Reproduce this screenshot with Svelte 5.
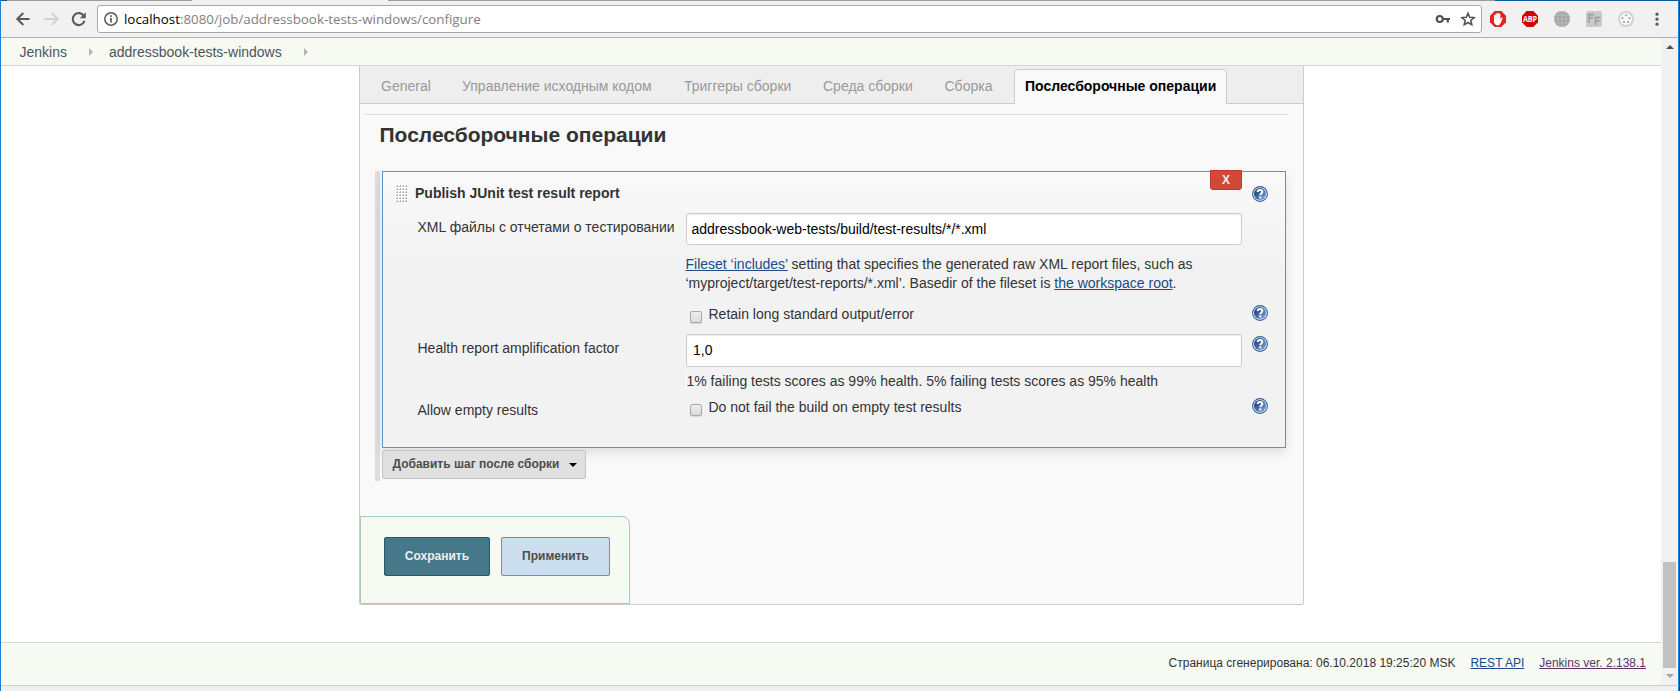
<script>
  const tabs = [
    { name: 'General', width: 81 },
    { name: 'Управление исходным кодом', width: 222 },
    { name: 'Триггеры сборки', width: 139 },
    { name: 'Среда сборки', width: 121.5 },
    { name: 'Сборка', width: 69.5 }
  ];
  const gripDots = Array.from({ length: 24 }, (_, i) => ({ x: (i % 4) * 3 + 1, y: Math.floor(i / 4) * 3 + 1 }));
</script>

{#snippet help()}
  <svg class="help" width="16" height="16" viewBox="0 0 16 16">
    <defs>
      <linearGradient id="helpFill" x1="0" y1="0" x2="1" y2="1">
        <stop offset="0.2" stop-color="#1f4680" />
        <stop offset="1" stop-color="#88aedc" />
      </linearGradient>
    </defs>
    <circle cx="8" cy="8" r="7.400" fill="#eef3fa" stroke="#355f9c" stroke-width="1.100" />
    <circle cx="8" cy="8" r="6" fill="url(#helpFill)" />
    <path d="M5.600 6C5.700 4.500 6.700 3.900 8 3.900c1.500 0 2.400.8 2.400 1.900 0 1.800-2.100 1.700-2.100 3.500" fill="none" stroke="#fff" stroke-width="2" />
    <rect x="7.200" y="10.400" width="2.100" height="2" fill="#fff" />
  </svg>
{/snippet}

<div class="window">
  <div class="titlebar"><i class="s1"></i><i class="s2"></i><i class="s3"></i><i class="s4"></i><i class="s5"></i></div>
  <header class="toolbar">
    <svg class="nav" width="86" height="32" viewBox="0 0 86 32">
      <path d="M28.500 18H16.500M22.300 12l-6 6 6 6" fill="none" stroke="#5a5a5e" stroke-width="2" />
      <path d="M43.500 18H56M50.700 12l6 6-6 6" fill="none" stroke="#d2d2d4" stroke-width="2" />
      <path d="M82.800 14.800A6 6 0 1 0 83.500 19.800" fill="none" stroke="#5a5a5e" stroke-width="2.100" />
      <path d="M84.800 11.200v6h-6z" fill="#5a5a5e" />
    </svg>
    <div class="omnibox">
      <svg width="16" height="16" viewBox="0 0 16 16">
        <circle cx="8" cy="8" r="6.200" fill="none" stroke="#5a5a5e" stroke-width="1.500" />
        <path d="M8 7v4.500M8 4.300v1.700" stroke="#5a5a5e" stroke-width="1.700" />
      </svg>
      <span class="url"><b>localhost</b>:8080/job/addressbook-tests-windows/configure</span>
      <svg class="key" width="16" height="16" viewBox="0 0 16 16">
        <circle cx="4.800" cy="8" r="3" fill="none" stroke="#505050" stroke-width="2.200" />
        <path d="M8 8h7M12.800 8v3.500" fill="none" stroke="#505050" stroke-width="2.200" />
      </svg>
      <svg class="star" width="16" height="16" viewBox="0 0 16 16">
        <path d="M8 2.200l1.700 4 4.400.4-3.300 2.900 1 4.300L8 11.500l-3.800 2.300 1-4.300L1.900 6.600l4.400-.4z" fill="none" stroke="#505050" stroke-width="1.500" />
      </svg>
    </div>
    <div class="extensions">
      <svg width="16" height="16" viewBox="0 0 16 16">
        <path d="M4.700 0h6.600L16 4.700v6.600L11.300 16H4.700L0 11.300V4.700z" fill="#e2241f" />
        <path d="M4 7.500V4.300q.8-.8 1.500 0V2.900q.8-.9 1.600 0V2.200q.9-.9 1.700 0v.8q.9-.8 1.600 0v5.200l1-1.500q1.500-.4 1.200.9L10.600 12.200 9 14.300H6.200L4 11.700z" fill="#fff" />
        <path d="M5.600 4.500v4M7.100 3.400v4.600M8.700 3.400v4.600" stroke="#f3b5b3" stroke-width=".4" />
      </svg>
      <svg width="16" height="16" viewBox="0 0 16 16">
        <path d="M4.700 0h6.600L16 4.700v6.600L11.300 16H4.700L0 11.300V4.700z" fill="#cf0000" />
        <text x="8" y="10.900" text-anchor="middle" font-size="8" font-weight="bold" font-family="Open Sans, sans-serif" fill="#fff" textLength="14.200" lengthAdjust="spacingAndGlyphs">ABP</text>
      </svg>
      <svg width="16" height="16" viewBox="0 0 16 16">
        <circle cx="8" cy="8" r="8" fill="#a4a4a4" />
        <path d="M8 0v16M0 8h16M1.500 4h13M1.500 12h13" stroke="#c4c4c4" fill="none" stroke-width=".7" />
        <ellipse cx="8" cy="8" rx="4.300" ry="7.700" stroke="#c4c4c4" fill="none" stroke-width=".7" />
      </svg>
      <svg width="16" height="16" viewBox="0 0 16 16">
        <rect width="16" height="16" rx="1.500" fill="#cacaca" />
        <path d="M2.800 11.500V3.500H8M2.800 7H7M9.500 14V6.500h5M9.500 10h4" stroke="#a2a2a2" stroke-width="1.900" fill="none" />
      </svg>
      <svg width="16" height="16" viewBox="0 0 16 16">
        <circle cx="8" cy="8" r="7" fill="#f8f8f8" stroke="#d2d2d2" stroke-width="2" />
        <path d="M8 3l1.300 1.300L8 5.500 6.700 4.300zM12.600 6.400l-.5 2-1.700-.6.300-1.700zM10.900 12l-1.900-.1.200-1.800 1.700-.1zM5.100 12l0-2 1.700.1.200 1.800zM3.400 6.400l1.900-.3.300 1.700-1.700.6z" fill="#a4a4a4" />
      </svg>
      <svg class="dots" width="16" height="16" viewBox="0 0 16 16">
        <circle cx="8" cy="3.200" r="1.600" /><circle cx="8" cy="8.200" r="1.600" /><circle cx="8" cy="13.200" r="1.600" />
      </svg>
    </div>
  </header>

  <div class="viewport">
    <div class="page">
      <nav class="crumbs">
        <span>Jenkins</span><i></i><span>addressbook-tests-windows</span><i></i>
      </nav>

      <main>
        <div class="panel">
          <div class="tabs">
            {#each tabs as tab}
              <span class="tab" style="width:{tab.width}px">{tab.name}</span>
            {/each}
            <span class="tab active">Послесборочные операции</span>
          </div>
          <div class="rule"></div>
          <h1>Послесборочные операции</h1>

          <div class="steps">
            <section class="card">
              <div class="row title">
                <svg class="grip" width="12" height="18" viewBox="0 0 12 18">
                  <rect width="12" height="18" fill="#fff" />
                  {#each gripDots as d}
                    <path d="M{d.x} {d.y + 2}v-1h1v-1h1v2z" fill="#b4b4b4" />
                  {/each}
                </svg>
                <strong>Publish JUnit test result report</strong>
                <button class="remove">X</button>
                {@render help()}
              </div>
              <div class="row r1">
                <span class="label">XML файлы с отчетами о тестировании</span>
                <div class="input">addressbook-web-tests/build/test-results/*/*.xml</div>
              </div>
              <div class="row hint">
                <span class="label"></span>
                <div><a>Fileset ‘includes’</a> setting that specifies the generated raw XML report files, such as<br />‘myproject/target/test-reports/*.xml’. Basedir of the fileset is <a>the workspace root</a>.</div>
              </div>
              <div class="row r2">
                <span class="label"></span>
                <div class="check"><i></i><span>Retain long standard output/error</span></div>
                {@render help()}
              </div>
              <div class="row r3">
                <span class="label">Health report amplification factor</span>
                <div class="input number">1,0</div>
                {@render help()}
              </div>
              <div class="row desc">
                <span class="label"></span>
                <div>1% failing tests scores as 99% health. 5% failing tests scores as 95% health</div>
              </div>
              <div class="row r4">
                <span class="label">Allow empty results</span>
                <div class="check"><i></i><span>Do not fail the build on empty test results</span></div>
                {@render help()}
              </div>
            </section>
            <button class="add">Добавить шаг после сборки <i></i></button>
          </div>

          <div class="actions">
            <button class="save">Сохранить</button>
            <button class="apply">Применить</button>
          </div>
        </div>
      </main>

      <footer>
        <span>Страница сгенерирована: 06.10.2018 19:25:20 MSK</span>
        <a>REST API</a>
        <a class="visited">Jenkins ver. 2.138.1</a>
      </footer>
    </div>
    <div class="scrollbar"><i class="up"></i><i class="thumb"></i><i class="down"></i></div>
  </div>
  <div class="bottom"></div>
</div>

<style>
  :global(body) { margin: 0; overflow: hidden; }
  .window, .window * { box-sizing: border-box; }
  .window { display: flex; flex-direction: column; width: 1680px; height: 691px; background: #f1f1f2; border-left: 1px solid #1883d7; border-right: 1px solid #1c4468; font: 14px/20px "Liberation Sans", Arial, sans-serif; color: #333; white-space: nowrap; }
  button { font: bold 12px/16px "Liberation Sans", Arial, sans-serif; padding: 0; margin: 0; }
  svg { display: block; flex: none; }
  a { color: #204a87; text-decoration: underline; }

  .titlebar { display: flex; height: 1px; flex: none; }
  .s1 { width: 6px; background: #0b5a9f; }
  .s2 { width: 185px; background: #a09c9e; }
  .s3 { width: 196px; background: #f1f1f2; }
  .s4 { width: 1107px; background: #a09c9e; }
  .s5 { flex: 1; background: #0b5a9f; }

  .toolbar { display: flex; height: 37px; flex: none; border-bottom: 1px solid #b0b0b2; border-right: 1px solid #1883d7; }
  .nav { margin: 0 10px 0 0; }
  .omnibox { display: flex; align-items: center; width: 1385px; height: 28px; margin-top: 4px; padding: 0 5px; background: #fff; border: 1px solid #a8a8aa; border-radius: 3px; }
  .url { flex: 1; margin-left: 5px; font: 13.35px/20px "Open Sans", sans-serif; color: #808080; }
  .url b { font-weight: normal; color: #000; }
  .key { margin-right: 9px; }
  .extensions { display: flex; gap: 16px; margin: 10px 0 0 8px; }
  .dots { fill: #5a5a5e; margin-left: -1.500px; }

  .viewport { display: flex; flex: none; height: 647px; border-right: 1px solid #1883d7; }
  .page { display: flex; flex-direction: column; width: 1660px; background: #fff; }
  .crumbs { display: flex; align-items: center; height: 28px; flex: none; padding: 1px 0 0 18.500px; background: #f6faf2; border-bottom: 1px solid #d3d7cf; color: #4d545d; }
  .crumbs i { width: 0; height: 0; border: 4px solid transparent; border-left-color: #b4b4b4; border-right: 0; }
  .crumbs i:nth-child(2) { margin: 0 16px 0 22px; }
  .crumbs i:last-child { margin-left: 22px; }

  main { height: 576px; flex: none; padding-left: 358px; }
  .panel { width: 945px; height: 539px; background: #f9f9f9; border: 1px solid #ccc; border-top: 0; border-radius: 0 0 3px 3px; }
  .tabs { display: flex; height: 38px; padding: 3px 0 0 21px; background: #eee; border-bottom: 1px solid #ccc; color: #999; }
  .tab { height: 34px; padding-top: 7px; }
  .tab.active { height: 35px; width: 213px; padding: 6px 0 0 10px; font-weight: bold; color: #000; background: #f9f9f9; border: 1px solid #ccc; border-bottom: 0; border-radius: 5px 5px 0 0; }
  .rule { width: 923px; height: 1px; margin: 10px 0 0 5px; background: #ddd; }
  h1 { margin: 8px 0 0 19.500px; height: 48px; font: bold 21px/24px "Liberation Sans", Arial, sans-serif; color: #333; }

  .steps { width: 911px; height: 310px; margin-left: 15px; padding-left: 2px; border-left: 5px solid #ddd; }
  .card { width: 904px; height: 277px; border: 1px solid #5c94c5; background: linear-gradient(#f9f9f9, #f2f2f2 36%); box-shadow: 0 5px 10px rgba(0, 0, 0, .1); }
  .row { display: flex; align-items: flex-start; padding-left: 34px; }
  .row > .help { margin-left: 10px; }
  .label { width: 269px; flex: none; padding-left: .5px; }
  .title { height: 41px; padding-left: 12px; }
  .grip { margin-top: 12px; }
  .title strong { flex: 1; margin: 11px 0 0 8px; }
  .title .remove { width: 32px; height: 20px; margin-top: -2px; color: #eee; background: #d24939; border: 1px solid #c0392b; border-radius: 0 0 3px 3px; }
  .title > .help { margin: 14px 17px 0 10px; }
  .r1 { height: 32px; }
  .r1 .label { padding-top: 4px; }
  .input { width: 556px; height: 32px; padding: 5px 4.500px 0; background: #fff; border: 1px solid #ccc; border-radius: 3px; color: #000; box-shadow: inset 0 1px 1px rgba(0, 0, 0, .08); }
  .hint { height: 60px; padding-top: 10px; line-height: 19px; }
  .hint div { margin-left: -.5px; }
  .r2 { height: 29px; }
  .check { display: flex; width: 556px; }
  .check i { width: 12px; height: 12px; margin: 6px 6.500px 0 4px; border: 1px solid #a8a8a8; border-radius: 2px; background: linear-gradient(#ececec, #dcdcdc); box-shadow: 0 1px 1px rgba(0, 0, 0, .12); }
  .check span { margin-top: -1px; }
  .r3 { height: 33px; }
  .r3 .label { padding-top: 4px; }
  .r3 .help { margin-top: 2px; }
  .number { height: 33px; padding: 5px 6px 0; }
  .desc { height: 31px; padding-top: 4px; }
  .desc div { border-left: 1px solid #fff; height: 19px; text-indent: -.5px; }
  .r4 .label { padding-top: 2px; }
  .add { display: flex; align-items: center; width: 204px; height: 29px; margin-top: 2px; padding: 0 0 2px 9.500px; border: 1px solid #c4c4c4; border-radius: 2px; background: #e0e0e0; color: #4d4d4d; }
  .add i { margin: 3px 0 0 9px; border: 4px solid transparent; border-top-color: #000; border-bottom: 0; }

  .actions { display: flex; align-items: flex-start; gap: 11px; width: 270px; height: 88px; margin-top: 35px; padding: 20px 0 0 23px; background: #f6faf2; border: 1px solid #a8ccb8; border-radius: 0 8px 0 0; }
  .save, .apply { height: 39px; border-radius: 2px; padding-bottom: 2px; }
  .save { width: 106px; background: #457888; border: 1px solid #2c5766; color: #eee; }
  .apply { width: 109px; background: #ccddee; border: 1px solid #5c94c5; color: #4d4d4d; }

  footer { display: flex; justify-content: flex-end; gap: 15px; height: 43px; padding: 10px 15px 0 0; background: #f6faf2; border-top: 1px solid #d3d7cf; font-size: 12px; }
  .visited { color: #5c3566; }

  .scrollbar { display: flex; flex-direction: column; align-items: center; width: 17px; background: #f1f1f1; }
  .up { margin-top: 7px; border: 4px solid transparent; border-bottom-color: #505050; border-top: 0; }
  .thumb { width: 13px; height: 106px; margin-top: 513px; background: #c1c1c1; }
  .down { margin-top: 6px; border: 4px solid transparent; border-top-color: #a3a3a3; border-bottom: 0; }
  .bottom { flex: 1; border-top: 1px solid #cfcfcf; border-right: 1px solid #1883d7; background: #f0f0f0; }
</style>
